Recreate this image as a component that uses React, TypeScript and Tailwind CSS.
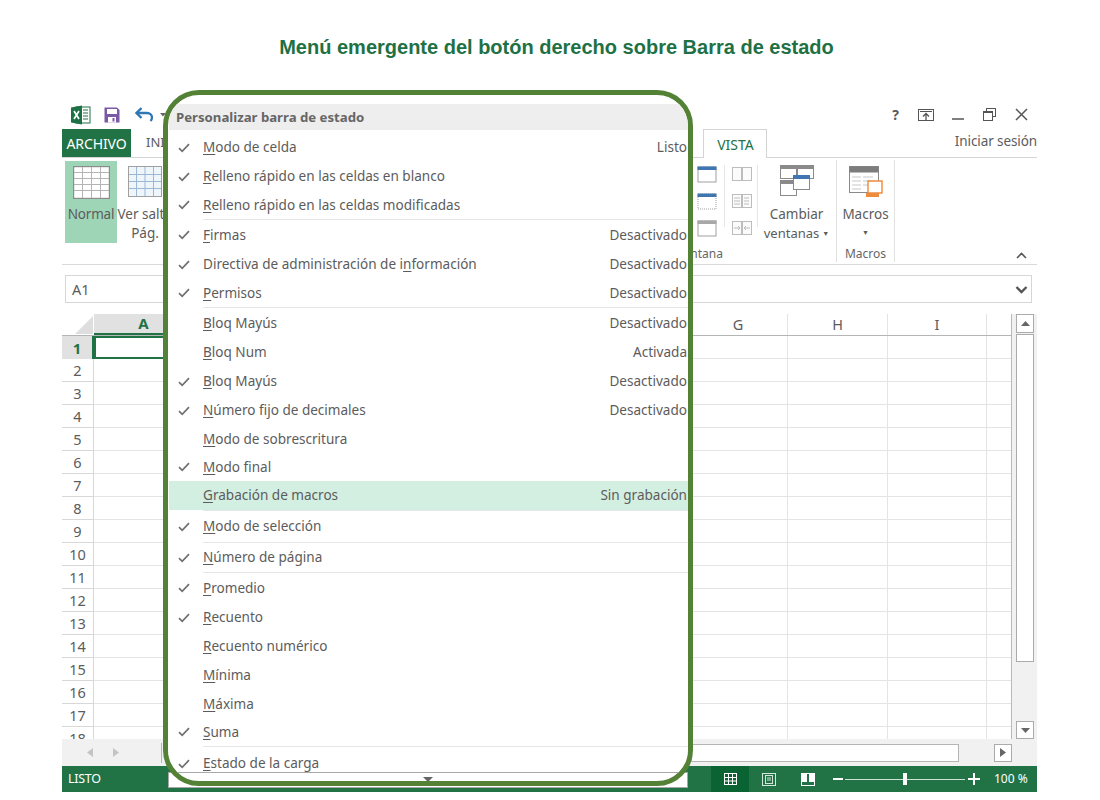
import React from "react";

type Row = { pre?: string; u: string; post: string; val?: string; check?: boolean; h: number; sep?: boolean; hl?: boolean; pt?: boolean };

const rows: Row[] = [
  { u: "M", post: "odo de celda", val: "Listo", check: true, h: 29 },
  { u: "R", post: "elleno rápido en las celdas en blanco", check: true, h: 29 },
  { u: "R", post: "elleno rápido en las celdas modificadas", check: true, h: 28, sep: true },
  { u: "F", post: "irmas", val: "Desactivado", check: true, h: 30 },
  { pre: "Directiva de administración de i", u: "n", post: "formación", val: "Desactivado", check: true, h: 29 },
  { u: "P", post: "ermisos", val: "Desactivado", check: true, h: 28, sep: true },
  { u: "B", post: "loq Mayús", val: "Desactivado", h: 30 },
  { u: "B", post: "loq Num", val: "Activada", h: 29 },
  { u: "B", post: "loq Mayús", val: "Desactivado", check: true, h: 29 },
  { u: "N", post: "úmero fijo de decimales", val: "Desactivado", check: true, h: 29 },
  { u: "M", post: "odo de sobrescritura", h: 28 },
  { u: "M", post: "odo final", check: true, h: 28 },
  { u: "G", post: "rabación de macros", val: "Sin grabación", h: 29, hl: true, sep: true },
  { u: "M", post: "odo de selección", check: true, h: 31, sep: true },
  { u: "N", post: "úmero de página", check: true, h: 29, sep: true },
  { u: "P", post: "romedio", check: true, h: 30 },
  { u: "R", post: "ecuento", check: true, h: 29 },
  { u: "R", post: "ecuento numérico", h: 29 },
  { u: "M", post: "ínima", h: 29 },
  { u: "M", post: "áxima", h: 28 },
  { u: "S", post: "uma", check: true, h: 28, sep: true },
  { u: "E", post: "stado de la carga", check: true, h: 25, pt: true },
];

const columns = ["A", "", "", "", "", "", "G", "H", "I", ""];
const widths = [99, 99, 99, 99, 99, 100, 99, 100, 99, 25];
const rowNums = Array.from({ length: 18 }, (_, i) => i + 1);

function Check() {
  return (
    <svg width="12" height="10" viewBox="0 0 12 10" className="shrink-0">
      <path d="M1 5.2 L4.2 8.4 L11 1.2" fill="none" stroke="#707070" strokeWidth="1.7" />
    </svg>
  );
}

function WinIcon({ top = "#3f75b0", dotted = false }: { top?: string; dotted?: boolean }) {
  return (
    <svg width="20" height="17" viewBox="0 0 20 17">
      <rect x="1" y="1" width="18" height="15" fill="#fff" stroke="#a0a0a0" strokeDasharray={dotted ? "1 1" : undefined} />
      <rect x="0.5" y="0.5" width="19" height="3.5" fill={top} />
    </svg>
  );
}

function FadedDoc({ kind }: { kind: number }) {
  return (
    <svg width="20" height="18" viewBox="0 0 20 18" fill="none" stroke="#bdbdbd">
      <rect x="0.5" y="2.5" width="9" height="13" fill="#fbfbfb" />
      <rect x="10.5" y="2.5" width="9" height="13" fill="#fbfbfb" />
      {kind === 1 && <path d="M2 6h6M2 9h6M2 12h6M12 6h5M12 9h5M12 12h5" />}
      {kind === 2 && <path d="M2 9h6M6 7l2 2-2 2M18 9h-6M14 7l-2 2 2 2" />}
    </svg>
  );
}

export default function App() {
  return (
    <div className="relative w-[1100px] h-[800px] bg-white overflow-hidden font-['Noto_Sans','Open_Sans',sans-serif] text-[#5c5c5c]">
      <div className="h-[100px] pt-[35px] pl-[13px] text-center font-['Liberation_Sans',Arial,sans-serif] font-bold text-[20px] leading-[24px] text-[#1e7145]">
        Menú emergente del botón derecho sobre Barra de estado
      </div>

      <div className="ml-[62px] w-[975px] h-[692px] flex flex-col">
        {/* Title bar */}
        <div className="h-[29px] flex items-center pl-[9px] pr-[9px]">
          <svg width="20" height="20" viewBox="0 0 20 20">
            <rect x="5" y="2" width="14" height="16" fill="#fff" stroke="#217346" />
            <path d="M12 5h5M12 8h5M12 11h5M12 14h5" stroke="#217346" />
            <path d="M0 2.5 L11 0.5 V19.5 L0 17.5Z" fill="#1e7145" />
            <path d="M3 6 L8 14 M8 6 L3 14" stroke="#fff" strokeWidth="1.7" />
          </svg>
          <svg width="16" height="16" viewBox="0 0 16 16" className="ml-[13px]">
            <path d="M0.5 0.5H13L15.5 3V15.5H0.5Z" fill="#7a5aa6" />
            <rect x="3" y="2" width="10" height="5" fill="#fff" />
            <rect x="4" y="10" width="8" height="5.5" fill="#fff" />
            <rect x="8.5" y="11" width="2" height="3.5" fill="#7a5aa6" />
          </svg>
          <svg width="19" height="15" viewBox="0 0 19 15" className="ml-[15px]">
            <path d="M2 6H12C15 6 17 8 17 10.5C17 12 16.5 13 15.5 14" fill="none" stroke="#2f76b5" strokeWidth="2.3" />
            <path d="M6.5 1 L1.5 6 L6.5 11" fill="none" stroke="#2f76b5" strokeWidth="2.3" />
          </svg>
          <svg width="6" height="4" viewBox="0 0 6 4" className="ml-[6px]">
            <path d="M0 0H6L3 3.5Z" fill="#666" />
          </svg>
          <div className="ml-auto flex items-center text-[#595959]">
            <span className="font-bold text-[14px] leading-none">?</span>
            <svg width="16" height="12" viewBox="0 0 16 12" className="ml-[19px]" fill="none" stroke="#555">
              <rect x="0.5" y="0.5" width="15" height="11" />
              <path d="M2 2.5H14" />
              <path d="M8 11V4.5M5 7.5L8 4.5L11 7.5" strokeWidth="1.3" />
            </svg>
            <svg width="12" height="12" viewBox="0 0 12 12" className="ml-[18px]">
              <path d="M0 10H12" stroke="#555" strokeWidth="1.5" />
            </svg>
            <svg width="13" height="13" viewBox="0 0 13 13" className="ml-[19px]" fill="none" stroke="#555">
              <rect x="3.5" y="0.5" width="9" height="8" />
              <rect x="0.5" y="3.5" width="9" height="9" fill="#fff" />
              <path d="M0.5 4.5H9.5" />
            </svg>
            <svg width="13" height="13" viewBox="0 0 13 13" className="ml-[19px]">
              <path d="M1 1L12 12M12 1L1 12" stroke="#555" strokeWidth="1.5" />
            </svg>
          </div>
        </div>

        {/* Tabs */}
        <div className="h-[29px] flex items-stretch border-b border-[#d4d4d4]">
          <div className="w-[69px] bg-[#217346] text-white text-[14px] tracking-[-0.1px] flex items-center justify-center">ARCHIVO</div>
          <div className="ml-[15px] text-[13px] flex items-center">INICIO</div>
          <div className="ml-[516px] w-[64px] h-[29px] bg-white border border-b-0 border-[#d4d4d4] text-[#217346] text-[14px] flex items-center justify-center">VISTA</div>
          <div className="ml-auto text-[13.5px] flex items-center tracking-[-0.1px] pb-[3px]">Iniciar sesión</div>
        </div>

        {/* Ribbon */}
        <div className="h-[107px] flex border-b border-[#d9d9d9]">
          <div className="w-[538px] flex pt-[3px] pl-[3px] text-[13.5px] leading-[19px]">
            <div className="w-[52px] h-[82px] bg-[#9fd5b7] flex flex-col items-center pt-[5px]">
              <svg width="37" height="33" viewBox="0 0 37 33" fill="#fff" stroke="#8c8c8c">
                <rect x="0.5" y="0.5" width="36" height="32" strokeWidth="1.4" />
                <path d="M9.5 1V32M18.5 1V32M27.5 1V32M1 6.5H36M1 12.5H36M1 18.5H36M1 24.5H36" stroke="#b5b5b5" />
              </svg>
              <span className="mt-[6px] tracking-[-0.2px]">Normal</span>
            </div>
            <div className="w-[52px] flex flex-col items-center pt-[5px] ml-[2px]">
              <svg width="34" height="31" viewBox="0 0 34 31" fill="#eef5fb" stroke="#9bb8d6">
                <rect x="0.5" y="0.5" width="33" height="30" stroke="#a0a0a0" />
                <path d="M8.5 1V30M17 1V30M25.5 1V30M1 8.5H33M1 15.5H33M1 22.5H33" />
              </svg>
              <span className="mt-[8px] whitespace-nowrap">Ver salto</span>
              <span>Pág.</span>
            </div>
          </div>

          <div className="w-[237px] flex flex-col border-r border-[#e2e2e2] my-[2px]">
            <div className="h-[88px] flex justify-end text-[13.5px] leading-[19px] pt-[5px] pr-[6px]">
              <div className="flex flex-col gap-[10px] pt-[1px]">
                <WinIcon />
                <WinIcon dotted />
                <WinIcon top="#a8a8a8" />
              </div>
              <div className="w-px h-[62px] bg-[#e6e6e6] mx-[7px]" />
              <div className="flex flex-col gap-[9px]">
                <FadedDoc kind={0} />
                <FadedDoc kind={1} />
                <FadedDoc kind={2} />
              </div>
              <div className="w-px h-[62px] bg-[#e6e6e6] mx-[5px]" />
              <div className="w-[67px] flex flex-col items-center">
                <svg width="34" height="31" viewBox="0 0 34 31" fill="#fff" stroke="#8a8a8a" className="ml-[1px]">
                  <rect x="0.5" y="0.5" width="16" height="13" />
                  <rect x="0.5" y="0.5" width="16" height="3" fill="#8a8a8a" />
                  <rect x="17.5" y="0.5" width="16" height="13" />
                  <rect x="17.5" y="0.5" width="16" height="3" fill="#8a8a8a" />
                  <rect x="0.5" y="15.5" width="16" height="15" />
                  <rect x="0.5" y="15.5" width="16" height="3" fill="#8a8a8a" />
                  <rect x="13.5" y="10.5" width="16" height="14" />
                  <rect x="13.5" y="10.5" width="16" height="3" fill="#3f75b0" stroke="#3f75b0" />
                </svg>
                <span className="mt-[9px]">Cambiar</span>
                <span className="whitespace-nowrap text-[13px]">ventanas<span className="text-[7px] align-[2px] ml-[3px]">▼</span></span>
              </div>
            </div>
            <div className="text-[12px] leading-[16px] text-right pr-[113px] text-[#666]">Ventana</div>
          </div>

          <div className="w-[58px] flex flex-col border-r border-[#e2e2e2] my-[2px]">
            <div className="h-[88px] flex flex-col items-center text-[13.5px] leading-[19px] pt-[6px]">
              <svg width="34" height="32" viewBox="0 0 34 32" className="ml-[1px]">
                <rect x="0.5" y="0.5" width="29" height="26" fill="#fff" stroke="#8a8a8a" />
                <rect x="0.5" y="0.5" width="29" height="6" fill="#7c7c7c" />
                <path d="M3 11H12M14 11H24M3 15H12M14 15H24M3 19H12M14 19H22M3 23H12" stroke="#c8c8c8" />
                <path d="M19 15H33V27H19Z" fill="#fff" stroke="#ed8b3e" strokeWidth="1.4" />
                <rect x="17" y="27" width="13" height="4" fill="#ed8b3e" />
              </svg>
              <span className="mt-[7px]">Macros</span>
              <span className="text-[7px] leading-[18px]">▼</span>
            </div>
            <div className="text-[12px] leading-[16px] text-center text-[#666]">Macros</div>
          </div>

          <div className="ml-auto self-end mb-[5px] mr-[10px]">
            <svg width="11" height="7" viewBox="0 0 11 7">
              <path d="M1 6L5.5 1.5L10 6" fill="none" stroke="#555" strokeWidth="1.6" />
            </svg>
          </div>
        </div>

        {/* Formula bar */}
        <div className="mt-[10px] ml-[3px] w-[967px] h-[28px] border border-[#d6d6d6] flex items-center justify-between pl-[6px] pr-[3px] pt-[1px] text-[14.5px]">
          <span>A1</span>
          <svg width="13" height="9" viewBox="0 0 13 9">
            <path d="M1.5 2L6.5 7L11.5 2" fill="none" stroke="#555" strokeWidth="2.4" />
          </svg>
        </div>

        {/* Sheet */}
        <div className="mt-[11px] h-[425px] flex">
          <div className="w-[950px] flex flex-col overflow-hidden border-r border-[#b8b8b8]">
            <div className="h-[22px] shrink-0 flex border-b border-[#b5b5b5]">
              <div className="w-[32px] shrink-0 flex items-end justify-end pr-[1px] pb-[1px]">
                <svg width="18" height="18" viewBox="0 0 18 18"><path d="M18 0V18H0Z" fill="#dedede" /></svg>
              </div>
              {columns.map((c, i) => (
                <div
                  key={i}
                  style={{ width: widths[i] }}
                  className={
                    i === 0
                      ? "shrink-0 bg-[#e1e1e1] border-b-2 border-[#217346] text-[#217346] font-bold text-[15px] flex items-center justify-center"
                      : "shrink-0 border-r border-[#e4e4e4] text-[14.5px] flex items-center justify-center"
                  }
                >
                  {c}
                </div>
              ))}
            </div>
            {rowNums.map((n) => (
              <div key={n} className="h-[23px] shrink-0 flex">
                <div
                  className={
                    n === 1
                      ? "w-[32px] shrink-0 bg-[#e1e1e1] border-r-2 border-[#217346] text-[#217346] font-bold text-[15px] flex items-center justify-center pt-[1px]"
                      : "w-[32px] shrink-0 border-r border-b border-[#d8d8d8] text-[14.5px] flex items-center justify-center pt-[1px]"
                  }
                >
                  {n}
                </div>
                {widths.map((w, i) => (
                  <div
                    key={i}
                    style={{ width: w }}
                    className={
                      n === 1 && i === 0
                        ? "shrink-0 border-2 border-[#217346]"
                        : "shrink-0 border-r border-b border-[#e4e4e4]"
                    }
                  />
                ))}
              </div>
            ))}
          </div>
          <div className="w-[25px] bg-[#f1f1f1] pl-[4px] pr-[3px] flex flex-col">
            <div className="h-[19px] bg-white border border-[#ababab] flex items-center justify-center">
              <svg width="9" height="5" viewBox="0 0 9 5"><path d="M0 5L4.5 0L9 5Z" fill="#666" /></svg>
            </div>
            <div className="mt-[1px] h-[328px] bg-white border border-[#ababab]" />
            <div className="mt-auto h-[18px] bg-white border border-[#ababab] flex items-center justify-center">
              <svg width="9" height="5" viewBox="0 0 9 5"><path d="M0 0L4.5 5L9 0Z" fill="#666" /></svg>
            </div>
          </div>
        </div>

        {/* Bottom bar */}
        <div className="h-[27px] bg-[#f1f1f1] flex items-center pl-[25px]">
          <svg width="6" height="9" viewBox="0 0 6 9"><path d="M6 0V9L0 4.5Z" fill="#c4c4c4" /></svg>
          <svg width="6" height="9" viewBox="0 0 6 9" className="ml-[20px]"><path d="M0 0V9L6 4.5Z" fill="#c4c4c4" /></svg>
          <div className="w-px h-[20px] bg-[#b5b5b5] ml-[42px]" />
          <div className="ml-auto h-[18px] w-[268px] bg-white border border-[#b5b5b5]" />
          <div className="w-[35px]" />
          <div className="w-[18px] h-[18px] bg-white border border-[#ababab] flex items-center justify-center">
            <svg width="6" height="9" viewBox="0 0 6 9"><path d="M0 0V9L6 4.5Z" fill="#666" /></svg>
          </div>
          <div className="w-[25px]" />
        </div>

        {/* Status bar */}
        <div className="h-[26px] bg-[#217346] flex items-center text-white">
          <span className="ml-[6px] w-[100px] text-[12.5px] tracking-[-0.3px]">LISTO</span>
          <div className="w-[520px] h-[16px] mt-[2px] bg-white border border-[#a8a8a8]" />
          <div className="ml-[23px] w-[38px] h-[26px] bg-[#0a6332] flex items-center justify-center">
            <svg width="13" height="12" viewBox="0 0 13 12" fill="none" stroke="#fff">
              <rect x="0.5" y="0.5" width="12" height="11" />
              <path d="M4.5 0V12M8.5 0V12M0 4.5H13M0 8H13" />
            </svg>
          </div>
          <svg width="14" height="13" viewBox="0 0 14 13" fill="none" stroke="#d5e6dc" className="ml-[13px]">
            <rect x="0.5" y="0.5" width="13" height="12" />
            <rect x="3.5" y="2.5" width="7" height="8" />
            <path d="M5 5H9M5 7H9" />
          </svg>
          <svg width="14" height="13" viewBox="0 0 14 13" className="ml-[25px]">
            <rect x="0.5" y="0.5" width="13" height="12" fill="none" stroke="#fff" />
            <path d="M1 1H6V9H1ZM8 1H13V9H8Z" fill="#fff" />
          </svg>
          <svg width="10" height="3" viewBox="0 0 10 3" className="ml-[18px]"><rect width="10" height="2" fill="#fff" /></svg>
          <div className="ml-[2px] w-[120px] h-[1px] bg-[#cfe2d7] flex items-center justify-center">
            <div className="w-[4px] h-[12px] bg-white" />
          </div>
          <svg width="12" height="12" viewBox="0 0 12 12" className="ml-[3px]"><path d="M5 0H7V5H12V7H7V12H5V7H0V5H5Z" fill="#fff" /></svg>
          <span className="ml-[14px] text-[12px]">100 %</span>
        </div>
      </div>

      {/* Popup with callout frame */}
      <div className="absolute left-[163px] top-[90px] w-[530px] h-[696px] rounded-[36px] border-[5px] border-[#538135] bg-white overflow-hidden pt-[9px] pl-[1px]">
        <div className="h-[26px] bg-[#eeeeee] pl-[7px] pt-[1px] flex items-center font-bold text-[13.2px] text-[#666]">Personalizar barra de estado</div>
        <div className="h-[3px]" />
        {rows.map((r, i) => (
          <div key={i}>
            <div style={{ height: r.h }} className={`flex items-center text-[13.55px] ${r.hl ? "bg-[#d3efe1]" : ""} ${r.pt ? "pt-[8px]" : ""}`}>
              <div className="w-[34px] pl-[9px] shrink-0 flex items-center">{r.check && <Check />}</div>
              <span className="whitespace-nowrap">
                {r.pre}
                <u className="underline underline-offset-2">{r.u}</u>
                {r.post}
              </span>
              <span className="ml-auto whitespace-nowrap pr-[1px]">{r.val}</span>
            </div>
            {r.sep && <div className="h-[1px] ml-[34px] bg-[#e6e6e6]" />}
          </div>
        ))}
        <div className="border-t border-[#a8a8a8] h-[9px] flex items-center justify-center pt-[4px] pr-[1px]">
          <svg width="10" height="5" viewBox="0 0 10 5"><path d="M0 0H10L5 5Z" fill="#666" /></svg>
        </div>
      </div>
    </div>
  );
}
